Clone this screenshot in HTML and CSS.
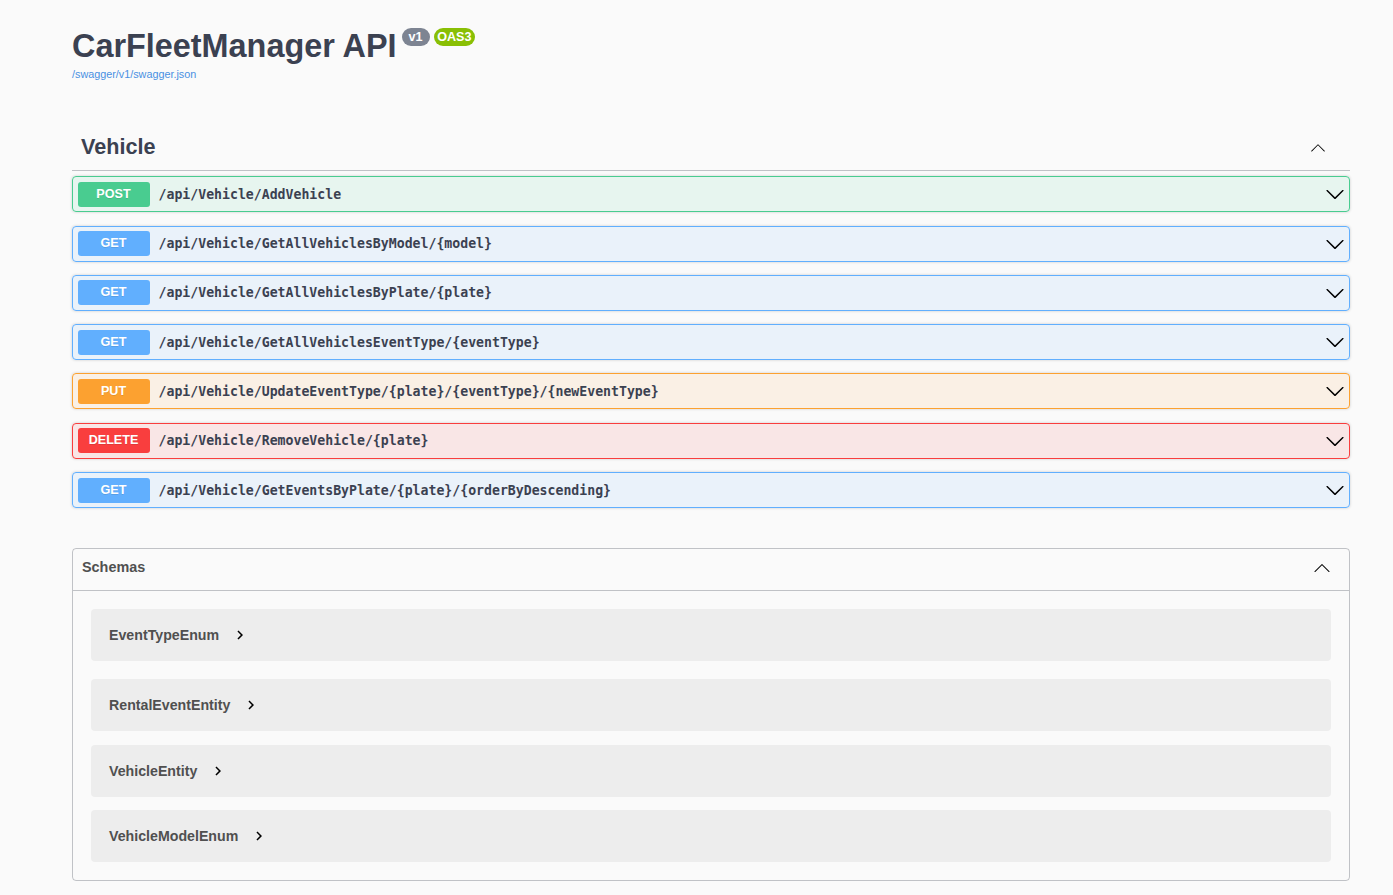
FILE: index.html
```html
<!DOCTYPE html>
<html lang="en">
<head>
<meta charset="utf-8">
<title>CarFleetManager API</title>
<link rel="stylesheet" href="styles.css">
</head>
<body>
<div class="wrapper">
  <div class="info">
    <h1 class="title">
      <span class="title-text">CarFleetManager API</span>
      <span class="badge badge-version">v1</span>
      <span class="badge badge-oas">OAS3</span>
    </h1>
    <a class="spec-link" href="#">/swagger/v1/swagger.json</a>
  </div>

  <section class="tag-section">
    <div class="tag-header">
      <h3 class="tag-name">Vehicle</h3>
      <svg class="arrow-up" width="18" height="18" viewBox="0 0 20 20"><path d="M17.418 14.908c-.189.189-.497.189-.686 0L10 8.18l-6.732 6.728c-.189.189-.496.189-.685 0-.189-.189-.189-.495 0-.684l7.073-7.072c.189-.189.496-.189.685 0l7.073 7.072c.19.19.19.495.004.684z"/></svg>
    </div>

    <div class="op op-post">
      <span class="method">POST</span>
      <span class="path">/api/Vehicle/AddVehicle</span>
      <svg class="arrow-down" width="20" height="20" viewBox="0 0 20 20"><path d="M17.418 6.109c.272-.268.709-.268.979 0s.271.701 0 .969l-7.908 7.83c-.27.268-.707.268-.979 0l-7.908-7.83c-.27-.268-.27-.701 0-.969.271-.268.709-.268.979 0L10 13.25l7.418-7.141z"/></svg>
    </div>
    <div class="op op-get">
      <span class="method">GET</span>
      <span class="path">/api/Vehicle/GetAllVehiclesByModel/{model}</span>
      <svg class="arrow-down" width="20" height="20" viewBox="0 0 20 20"><path d="M17.418 6.109c.272-.268.709-.268.979 0s.271.701 0 .969l-7.908 7.83c-.27.268-.707.268-.979 0l-7.908-7.83c-.27-.268-.27-.701 0-.969.271-.268.709-.268.979 0L10 13.25l7.418-7.141z"/></svg>
    </div>
    <div class="op op-get">
      <span class="method">GET</span>
      <span class="path">/api/Vehicle/GetAllVehiclesByPlate/{plate}</span>
      <svg class="arrow-down" width="20" height="20" viewBox="0 0 20 20"><path d="M17.418 6.109c.272-.268.709-.268.979 0s.271.701 0 .969l-7.908 7.83c-.27.268-.707.268-.979 0l-7.908-7.83c-.27-.268-.27-.701 0-.969.271-.268.709-.268.979 0L10 13.25l7.418-7.141z"/></svg>
    </div>
    <div class="op op-get">
      <span class="method">GET</span>
      <span class="path">/api/Vehicle/GetAllVehiclesEventType/{eventType}</span>
      <svg class="arrow-down" width="20" height="20" viewBox="0 0 20 20"><path d="M17.418 6.109c.272-.268.709-.268.979 0s.271.701 0 .969l-7.908 7.83c-.27.268-.707.268-.979 0l-7.908-7.83c-.27-.268-.27-.701 0-.969.271-.268.709-.268.979 0L10 13.25l7.418-7.141z"/></svg>
    </div>
    <div class="op op-put">
      <span class="method">PUT</span>
      <span class="path">/api/Vehicle/UpdateEventType/{plate}/{eventType}/{newEventType}</span>
      <svg class="arrow-down" width="20" height="20" viewBox="0 0 20 20"><path d="M17.418 6.109c.272-.268.709-.268.979 0s.271.701 0 .969l-7.908 7.83c-.27.268-.707.268-.979 0l-7.908-7.83c-.27-.268-.27-.701 0-.969.271-.268.709-.268.979 0L10 13.25l7.418-7.141z"/></svg>
    </div>
    <div class="op op-delete">
      <span class="method">DELETE</span>
      <span class="path">/api/Vehicle/RemoveVehicle/{plate}</span>
      <svg class="arrow-down" width="20" height="20" viewBox="0 0 20 20"><path d="M17.418 6.109c.272-.268.709-.268.979 0s.271.701 0 .969l-7.908 7.83c-.27.268-.707.268-.979 0l-7.908-7.83c-.27-.268-.27-.701 0-.969.271-.268.709-.268.979 0L10 13.25l7.418-7.141z"/></svg>
    </div>
    <div class="op op-get">
      <span class="method">GET</span>
      <span class="path">/api/Vehicle/GetEventsByPlate/{plate}/{orderByDescending}</span>
      <svg class="arrow-down" width="20" height="20" viewBox="0 0 20 20"><path d="M17.418 6.109c.272-.268.709-.268.979 0s.271.701 0 .969l-7.908 7.83c-.27.268-.707.268-.979 0l-7.908-7.83c-.27-.268-.27-.701 0-.969.271-.268.709-.268.979 0L10 13.25l7.418-7.141z"/></svg>
    </div>
  </section>

  <section class="models">
    <div class="models-header">
      <h4 class="models-title">Schemas</h4>
      <svg class="arrow-up" width="20" height="20" viewBox="0 0 20 20"><path d="M17.418 14.908c-.189.189-.497.189-.686 0L10 8.18l-6.732 6.728c-.189.189-.496.189-.685 0-.189-.189-.189-.495 0-.684l7.073-7.072c.189-.189.496-.189.685 0l7.073 7.072c.19.19.19.495.004.684z"/></svg>
    </div>
    <div class="model-list">
      <div class="model">
        <span class="model-title">EventTypeEnum</span>
        <svg class="model-toggle" width="18" height="18" viewBox="0 0 24 24"><path d="M10 6 8.59 7.41 13.17 12l-4.58 4.59L10 18l6-6z"/></svg>
      </div>
      <div class="model">
        <span class="model-title">RentalEventEntity</span>
        <svg class="model-toggle" width="18" height="18" viewBox="0 0 24 24"><path d="M10 6 8.59 7.41 13.17 12l-4.58 4.59L10 18l6-6z"/></svg>
      </div>
      <div class="model">
        <span class="model-title">VehicleEntity</span>
        <svg class="model-toggle" width="18" height="18" viewBox="0 0 24 24"><path d="M10 6 8.59 7.41 13.17 12l-4.58 4.59L10 18l6-6z"/></svg>
      </div>
      <div class="model">
        <span class="model-title">VehicleModelEnum</span>
        <svg class="model-toggle" width="18" height="18" viewBox="0 0 24 24"><path d="M10 6 8.59 7.41 13.17 12l-4.58 4.59L10 18l6-6z"/></svg>
      </div>
    </div>
  </section>
</div>
</body>
</html>
```

FILE: styles.css
```css
html, body {
  margin: 0;
  padding: 0;
  background: #fafafa;
}

body {
  font-family: "Liberation Sans", Arial, sans-serif;
  color: #3b4151;
}

.wrapper {
  width: 1278px;
  margin-left: 72px;
}

/* ---------- Info ---------- */
.info {
  padding-top: 28px;
}

.title {
  display: flex;
  align-items: flex-start;
  margin: 0;
  font-size: 32.4px;
  line-height: 1.15;
  font-weight: 700;
  color: #3b4151;
}

.badge {
  box-sizing: border-box;
  margin-top: 0;
  margin-left: 4px;
  padding: 2px 3.6px;
  min-width: 28px;
  text-align: center;
  border-radius: 51px;
  color: #fff;
  font-size: 12.6px;
  line-height: 14px;
  font-weight: 700;
}

.badge-version {
  margin-left: 5px;
  background: #7d8492;
}

.badge-oas {
  background: #89bf04;
}

.spec-link {
  display: block;
  margin-top: 2.5px;
  font-size: 10.8px;
  line-height: 1.15;
  color: #4990e2;
  text-decoration: none;
}

/* ---------- Tag section ---------- */
.tag-section {
  margin-top: 43px;
  display: flex;
  flex-direction: column;
}

.tag-header {
  box-sizing: border-box;
  height: 48px;
  display: flex;
  align-items: center;
  justify-content: space-between;
  padding: 0 23px 0 9px;
  border-bottom: 1px solid rgba(59, 65, 81, 0.3);
  margin-bottom: 5px;
}

.tag-name {
  margin: 0;
  font-size: 21.6px;
  font-weight: 700;
  color: #3b4151;
}

.arrow-up path,
.arrow-down path {
  fill: #000;
}

.op {
  box-sizing: border-box;
  height: 36px;
  display: flex;
  align-items: center;
  padding: 0 4.5px;
  margin-bottom: 13.33px;
  border: 1px solid;
  border-radius: 4px;
  box-shadow: 0 0 3px rgba(0, 0, 0, 0.19);
}

.op:last-child {
  margin-bottom: 0;
}

.method {
  box-sizing: border-box;
  min-width: 72px;
  height: 25px;
  line-height: 25px;
  text-align: center;
  border-radius: 3px;
  color: #fff;
  font-size: 12.6px;
  font-weight: 700;
  text-shadow: 0 1px 0 rgba(0, 0, 0, 0.1);
}

.path {
  flex: 1;
  padding-left: 9px;
  font-family: "DejaVu Sans Mono", "Liberation Mono", monospace;
  font-size: 13.2px;
  font-weight: 700;
  color: #3b4151;
  white-space: nowrap;
}

.op-post { background: rgba(73, 204, 144, 0.1); border-color: #49cc90; }
.op-post .method { background: #49cc90; }
.op-get { background: rgba(97, 175, 254, 0.1); border-color: #61affe; }
.op-get .method { background: #61affe; }
.op-put { background: rgba(252, 161, 48, 0.1); border-color: #fca130; }
.op-put .method { background: #fca130; }
.op-delete { background: rgba(249, 62, 62, 0.1); border-color: #f93e3e; }
.op-delete .method { background: #f93e3e; }

/* ---------- Schemas ---------- */
.models {
  margin-top: 40px;
  border: 1px solid rgba(59, 65, 81, 0.3);
  border-radius: 4px;
}

.models-header {
  height: 35px;
  display: flex;
  align-items: center;
  justify-content: space-between;
  padding: 0 17px 6px 9px;
  border-bottom: 1px solid rgba(59, 65, 81, 0.3);
}

.models-title {
  margin: 0;
  font-size: 14.4px;
  font-weight: 700;
  color: #505050;
}

.model-list {
  display: flex;
  flex-direction: column;
  padding: 18px;
}

.model {
  box-sizing: border-box;
  height: 52px;
  display: flex;
  align-items: center;
  gap: 11.5px;
  margin-bottom: 13.5px;
  padding: 0 18px;
  background: rgba(0, 0, 0, 0.05);
  border-radius: 4px;
}

.model:first-child {
  margin-bottom: 18px;
}

.model:last-child {
  margin-bottom: 0;
}

.model-title {
  font-size: 14.2px;
  font-weight: 700;
  color: #505050;
}

.model-toggle path {
  fill: #000;
}
```
